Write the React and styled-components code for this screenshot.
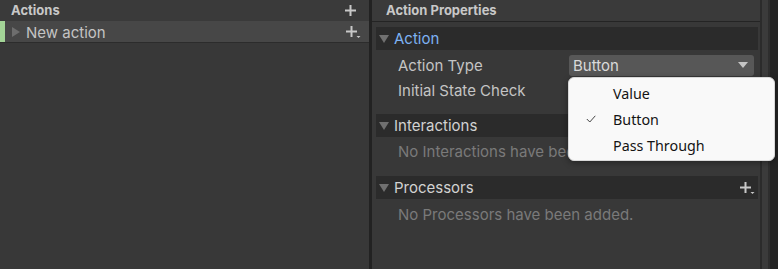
import React from "react";
import styled, { createGlobalStyle } from "styled-components";

const Global = createGlobalStyle`
  html, body { margin: 0; padding: 0; background: #383838; }
  body { font-family: Inter, "Noto Sans", sans-serif; }
`;

const Root = styled.div`
  width: 778px;
  height: 269px;
  display: flex;
  background: #383838;
  overflow: hidden;
  position: relative;
`;

const LeftPanel = styled.div`
  width: 369px;
  display: flex;
  flex-direction: column;
`;

const PanelHeader = styled.div`
  height: 21px;
  display: flex;
  align-items: center;
  justify-content: space-between;
  padding: 0 9px 0 ${(p) => (p.$bordered ? 14 : 11)}px;
  box-sizing: border-box;
  background: #3a3a3a;
  ${(p) => p.$bordered && "border-bottom: 1px solid #242424; height: 22px;"}
`;

const HeaderTitle = styled.span`
  font-size: 13px;
  font-weight: 700;
  color: #c8c8c8;
  padding-bottom: 2px;
`;

const ActionRow = styled.div`
  height: 21px;
  display: flex;
  align-items: center;
  background: #474747;
  border-bottom: 1px solid #2c2c2c;
  padding-right: 8px;
`;

const GreenMark = styled.div`
  width: 5px;
  align-self: stretch;
  background: #a3d497;
`;

const Caret = styled.span`
  width: 0;
  height: 0;
  border-style: solid;
  border-width: ${(p) => (p.$open ? "8px 5px 0 5px" : "5px 0 5px 8px")};
  border-color: ${(p) =>
    p.$open
      ? "#707070 transparent transparent transparent"
      : "transparent transparent transparent #6e6e6e"};
  margin: ${(p) => (p.$open ? "0 5px 0 3px" : "0 6px 0 7px")};
`;

const RowLabel = styled.span`
  flex: 1;
  font-size: 15px;
  color: #c4c4c4;
  padding-top: 2px;
`;

const Divider = styled.div`
  width: 3px;
  background: #222222;
`;

const RightPanel = styled.div`
  width: 388px;
  display: flex;
  flex-direction: column;
  border-right: 2px solid #2b2b2b;
`;

const Scroller = styled.div`
  flex: 1;
  display: flex;
`;

const ScrollTrack = styled.div`
  width: 6px;
  background: #3b3b3b;
  border-right: 2px solid #2e2e2e;
`;

const ScrollOuter = styled.div`
  flex: 1;
  background: #242424;
`;

const Content = styled.div`
  padding: 5px 2px 0 4px;
  display: flex;
  flex-direction: column;
`;

const Foldout = styled.div`
  height: 23px;
  display: flex;
  align-items: center;
  background: #2b2b2b;
  padding-right: 3px;
  margin-top: ${(p) => p.$mt || 0}px;
`;

const FoldTitle = styled.span`
  flex: 1;
  font-size: 15px;
  color: ${(p) => (p.$active ? "#7eb2f2" : "#d2d2d2")};
`;

const PropRow = styled.div`
  height: 22px;
  display: flex;
  align-items: center;
  padding-left: 22px;
  margin-top: ${(p) => p.$mt || 0}px;
`;

const PropLabel = styled.span`
  width: 171px;
  font-size: 15px;
  color: #c4c4c4;
`;

const Dropdown = styled.div`
  width: 185px;
  height: 21px;
  box-sizing: border-box;
  background: #575757;
  border-radius: 3px;
  display: flex;
  align-items: center;
  justify-content: space-between;
  padding: 0 6px 0 4px;
  font-size: 15px;
  color: #dadada;
`;

const DropArrow = styled.span`
  width: 0;
  height: 0;
  border-style: solid;
  border-width: 6px 5px 0 5px;
  border-color: #c4c4c4 transparent transparent transparent;
`;

const Empty = styled.div`
  height: 22px;
  display: flex;
  align-items: center;
  padding-left: 22px;
  font-size: 15px;
  color: #7a7a7a;
  margin-top: ${(p) => p.$mt || 0}px;
`;

const Menu = styled.div`
  position: absolute;
  left: 568px;
  top: 77px;
  width: 207px;
  height: 84px;
  box-sizing: border-box;
  background: #f9f9f9;
  border: 1px solid #d8d8d8;
  border-radius: 6px;
  box-shadow: 0 2px 6px rgba(0, 0, 0, 0.35);
  padding-top: 2px;
  font-family: "Noto Sans", "Open Sans", sans-serif;
`;

const MenuItem = styled.div`
  height: 26px;
  display: flex;
  align-items: center;
  font-size: 14.3px;
  color: #141414;
`;

const CheckCell = styled.span`
  width: 44px;
  display: flex;
  justify-content: center;
`;

const PlusIcon = ({ dropdown }) => (
  <svg width="16" height="14" viewBox="0 0 16 14">
    <path d="M6.5 1v11M1 6.5h11" stroke="#c8c8c8" strokeWidth="2" fill="none" />
    {dropdown && <path d="M11.5 11h4l-2 2z" fill="#c8c8c8" />}
  </svg>
);

const Check = () => (
  <svg width="10" height="8" viewBox="0 0 10 8">
    <path d="M0.8 4l3 3L9.3 0.8" stroke="#444" strokeWidth="1" fill="none" />
  </svg>
);

export default function App() {
  return (
    <>
      <Global />
      <Root>
        <LeftPanel>
          <PanelHeader>
            <HeaderTitle>Actions</HeaderTitle>
            <PlusIcon />
          </PanelHeader>
          <ActionRow>
            <GreenMark />
            <Caret />
            <RowLabel>New action</RowLabel>
            <PlusIcon dropdown />
          </ActionRow>
        </LeftPanel>
        <Divider />
        <RightPanel>
          <PanelHeader $bordered>
            <HeaderTitle>Action Properties</HeaderTitle>
          </PanelHeader>
          <Content>
            <Foldout>
              <Caret $open />
              <FoldTitle $active>Action</FoldTitle>
            </Foldout>
            <PropRow $mt={4}>
              <PropLabel>Action Type</PropLabel>
              <Dropdown>
                <span>Button</span>
                <DropArrow />
              </Dropdown>
            </PropRow>
            <PropRow $mt={3}>
              <PropLabel>Initial State Check</PropLabel>
            </PropRow>
            <Foldout $mt={13}>
              <Caret $open />
              <FoldTitle>Interactions</FoldTitle>
            </Foldout>
            <Empty $mt={3}>No Interactions have been added.</Empty>
            <Foldout $mt={14}>
              <Caret $open />
              <FoldTitle>Processors</FoldTitle>
              <PlusIcon dropdown />
            </Foldout>
            <Empty $mt={4}>No Processors have been added.</Empty>
          </Content>
        </RightPanel>
        <Scroller>
          <ScrollTrack />
          <ScrollOuter />
        </Scroller>
        <Menu>
          <MenuItem>
            <CheckCell />
            Value
          </MenuItem>
          <MenuItem>
            <CheckCell>
              <Check />
            </CheckCell>
            Button
          </MenuItem>
          <MenuItem>
            <CheckCell />
            Pass Through
          </MenuItem>
        </Menu>
      </Root>
    </>
  );
}
